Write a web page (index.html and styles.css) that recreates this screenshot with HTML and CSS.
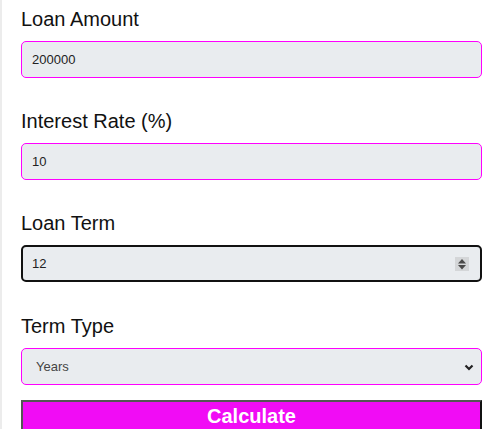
FILE: index.html
```html
<!DOCTYPE html>
<html lang="en">
<head>
<meta charset="utf-8">
<title>Loan Calculator</title>
<link rel="stylesheet" href="styles.css">
</head>
<body>
<form class="calc">
  <div class="group">
    <label class="label" for="amount">Loan Amount</label>
    <input class="field" id="amount" type="text" value="200000">
  </div>
  <div class="group">
    <label class="label" for="rate">Interest Rate (%)</label>
    <input class="field" id="rate" type="text" value="10">
  </div>
  <div class="group">
    <label class="label" for="term">Loan Term</label>
    <div class="field field-focus">
      <input class="bare" id="term" type="text" value="12">
      <svg class="spin" width="14" height="14" viewBox="0 0 14 14" aria-hidden="true">
        <rect x="0" y="0" width="14" height="14" fill="#d4d6d8"/>
        <polygon points="7,2 11,6.5 3,6.5" fill="#4a4a4a"/>
        <polygon points="3,8 11,8 7,12.5" fill="#4a4a4a"/>
      </svg>
    </div>
  </div>
  <div class="group group-last">
    <label class="label" for="type">Term Type</label>
    <div class="select-wrap">
      <select class="field select" id="type">
        <option>Years</option>
        <option>Months</option>
      </select>
      <svg class="chev" width="10" height="7" viewBox="0 0 10 7" aria-hidden="true">
        <polyline points="1.5,1.5 5,5 8.5,1.5" fill="none" stroke="#222" stroke-width="2.2"/>
      </svg>
    </div>
  </div>
  <button class="btn" type="button">Calculate</button>
</form>
</body>
</html>
```
FILE: styles.css
```css
html, body {
  margin: 0;
  padding: 0;
  background: #fff;
}
body {
  border-left: 2px solid #ececec;
  min-height: 429px;
  box-sizing: border-box;
  font-family: "Liberation Sans", Arial, sans-serif;
}
.calc {
  padding: 8px 14px 0 19px;
  display: flex;
  flex-direction: column;
}
.group {
  display: flex;
  flex-direction: column;
  margin-bottom: 32px;
}
.group-last {
  margin-top: 1px;
  margin-bottom: 15px;
}
.label {
  font-size: 20px;
  line-height: 23px;
  color: #111;
  margin-bottom: 10px;
}
.field {
  box-sizing: border-box;
  height: 37px;
  width: 100%;
  margin: 0;
  padding: 0 10px;
  border: 1px solid #ff00ff;
  border-radius: 5px;
  background: #e9ecef;
  font-family: "Liberation Sans", Arial, sans-serif;
  font-size: 13px;
  color: #222;
  outline: none;
}
.field-focus {
  display: flex;
  align-items: center;
  border: 2px solid #111;
  padding: 0 11px 0 9px;
}
.bare {
  flex: 1;
  min-width: 0;
  border: none;
  background: transparent;
  padding: 0;
  margin: 0;
  font-family: "Liberation Sans", Arial, sans-serif;
  font-size: 13px;
  color: #222;
  outline: none;
}
.spin {
  display: block;
  flex: none;
}
.select-wrap {
  position: relative;
}
.select {
  -webkit-appearance: none;
  appearance: none;
  padding-left: 14px;
  color: #444;
}
.chev {
  position: absolute;
  right: 8px;
  top: 16px;
  pointer-events: none;
}
.btn {
  box-sizing: border-box;
  width: 100%;
  height: 32px;
  margin: 0;
  padding: 0;
  background: #f10cf5;
  border-style: solid;
  border-width: 2px;
  border-color: #555 #111 #111 #555;
  color: #fff;
  font-family: "Liberation Sans", Arial, sans-serif;
  font-weight: bold;
  font-size: 20px;
  line-height: 24px;
  text-align: center;
}
```
